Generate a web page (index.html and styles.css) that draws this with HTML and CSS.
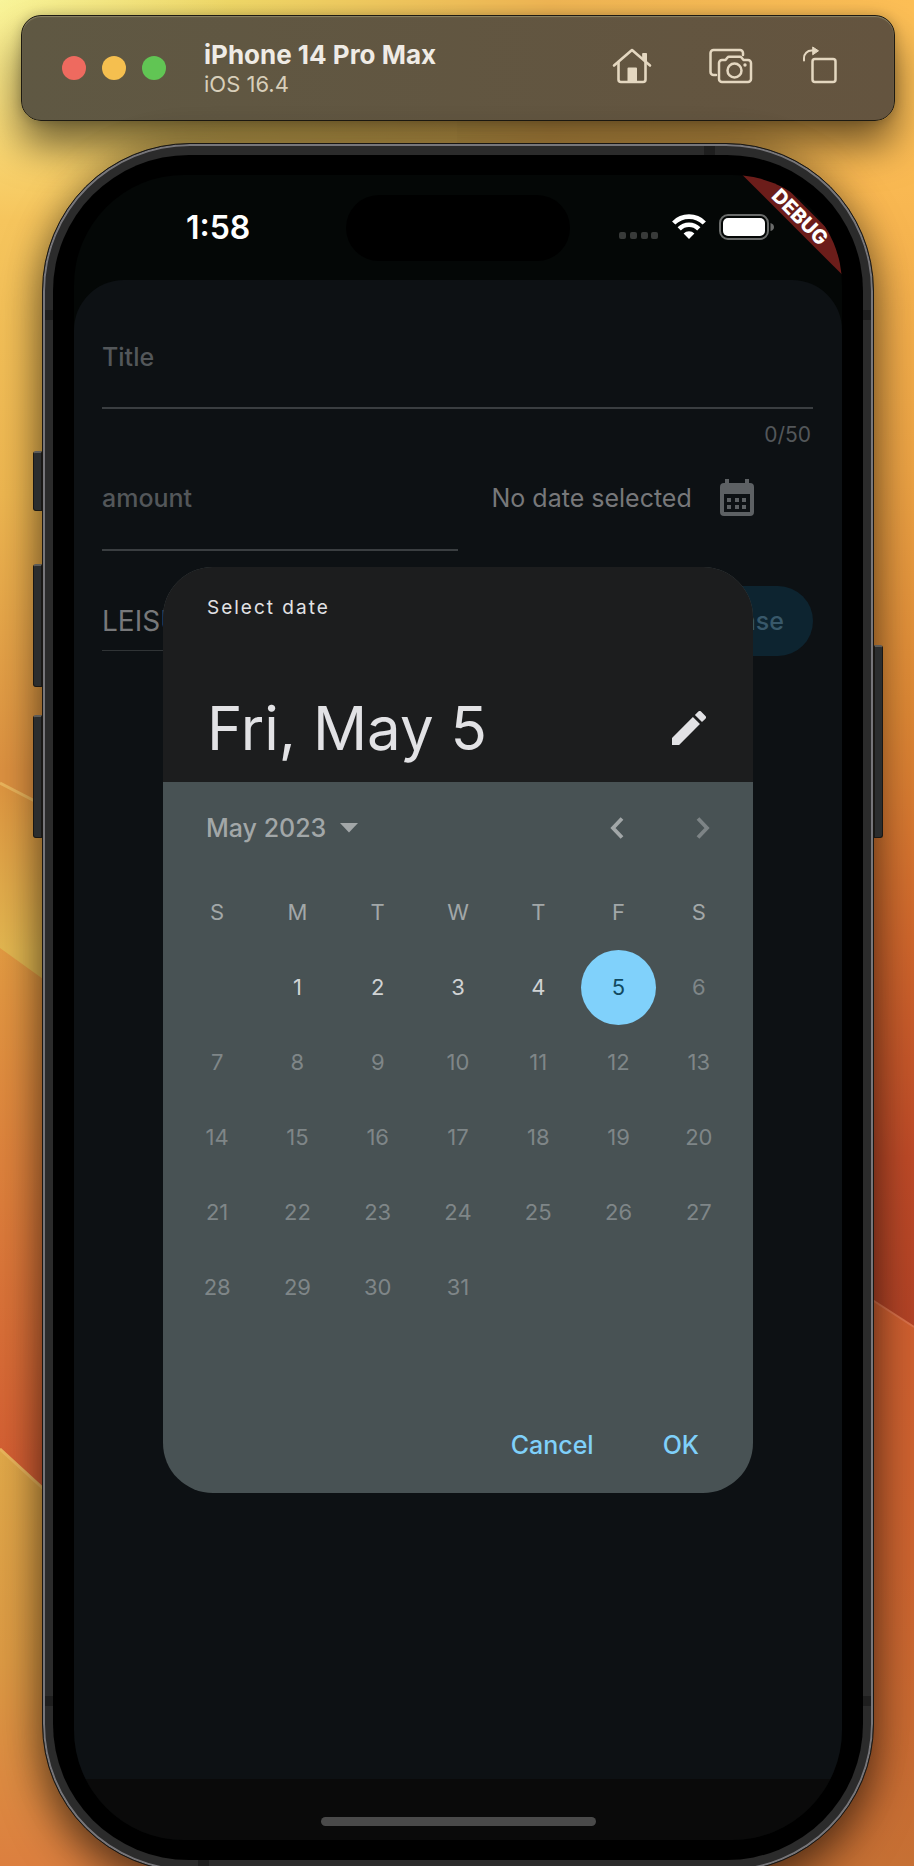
FILE: index.html
```html
<!DOCTYPE html>
<html lang="en">
<head>
<meta charset="utf-8">
<meta name="viewport" content="width=device-width, initial-scale=1">
<title>iPhone 14 Pro Max</title>
<link rel="stylesheet" href="styles.css">
</head>
<body>
<div class="desktop">
  <svg class="wallpaper" viewBox="0 0 914 1866" preserveAspectRatio="none" aria-hidden="true">
    <defs>
      <linearGradient id="top" x1="0" y1="0" x2="1" y2="0"><stop offset="0" stop-color="#f9f59a"/><stop offset=".25" stop-color="#f0d968"/><stop offset=".6" stop-color="#f0b654"/><stop offset="1" stop-color="#fdbf56"/></linearGradient>
      <linearGradient id="left" x1="0" y1="0" x2="0" y2="1"><stop offset="0" stop-color="#fbc95f" stop-opacity="0"/><stop offset=".2" stop-color="#f6c55d"/><stop offset=".45" stop-color="#edb650"/><stop offset=".7" stop-color="#db9040"/></linearGradient>
      <linearGradient id="left2" gradientUnits="userSpaceOnUse" x1="0" y1="790" x2="0" y2="950"><stop offset="0" stop-color="#dd9641"/><stop offset="1" stop-color="#e2b650"/></linearGradient>
      <linearGradient id="left3" gradientUnits="userSpaceOnUse" x1="0" y1="948" x2="0" y2="1460"><stop offset="0" stop-color="#e29a42"/><stop offset=".5" stop-color="#dc7d3b"/><stop offset="1" stop-color="#d45f33"/></linearGradient>
      <linearGradient id="left4" x1="0" y1="0" x2="0" y2="1"><stop offset="0" stop-color="#e0a849"/><stop offset=".5" stop-color="#dc9a44"/><stop offset="1" stop-color="#dc7f3f"/></linearGradient>
      <linearGradient id="right" x1="0" y1="0" x2="0" y2="1"><stop offset="0" stop-color="#fdbf56"/><stop offset=".3" stop-color="#eca345"/><stop offset=".5" stop-color="#dc8735"/><stop offset=".68" stop-color="#cf672d"/><stop offset=".86" stop-color="#bd4a28"/><stop offset="1" stop-color="#b24326"/></linearGradient>
      <linearGradient id="right2" x1="0" y1="0" x2="0" y2="1"><stop offset="0" stop-color="#cf5e30"/><stop offset=".5" stop-color="#cc6430"/><stop offset="1" stop-color="#c67034"/></linearGradient>
    </defs>
    <rect width="914" height="1866" fill="url(#top)"/>
    <path d="M0 0H457V1100L0 790Z" fill="url(#left)"/>
    <path d="M0 782L100 834V1100L0 1000Z" fill="url(#left2)"/>
    <path d="M0 948L100 1020V1600L0 1460Z" fill="url(#left3)"/>
    <path d="M0 1448L457 1866H0Z" fill="url(#left4)"/>
    <path d="M0 783L60 814M0 1449L60 1504" stroke="#e9b45c" stroke-width="3"/>
    <path d="M800 100H914V1330H800Z" fill="url(#right)"/>
    <path d="M800 1253L914 1327V1866H457V1253Z" fill="url(#right2)"/>
    <path d="M860 1292L914 1327" stroke="#d9714a" stroke-width="2"/>
  </svg>

  <header class="toolbar">
    <div class="lights">
      <button class="light light-close" aria-label="Close"></button>
      <button class="light light-min" aria-label="Minimize"></button>
      <button class="light light-zoom" aria-label="Zoom"></button>
    </div>
    <div class="device">
      <h1 class="device-name">iPhone 14 Pro Max</h1>
      <p class="device-os">iOS 16.4</p>
    </div>
    <nav class="tools">
      <button class="tool" aria-label="Home">
        <svg width="40" height="40" viewBox="0 0 40 40" fill="none" stroke="currentColor" stroke-width="2.6" stroke-linecap="round" stroke-linejoin="round"><path d="M2 19.500L20 4L38 19.500"/><path d="M6.500 16V33.500a2.500 2.500 0 0 0 2.500 2.500H31a2.500 2.500 0 0 0 2.500-2.500V16"/><path d="M31 7.500h3.500v8L31 12.500z" fill="currentColor" stroke-width="1"/><path d="M16.500 22.500h7.500v13h-7.500z" fill="currentColor" stroke-width="2"/></svg>
      </button>
      <button class="tool" aria-label="Screenshot">
        <svg width="44" height="40" viewBox="0 0 44 40" fill="none" stroke="currentColor" stroke-width="2.500" stroke-linecap="round" stroke-linejoin="round"><path d="M7 29H4.500A3 3 0 0 1 1.500 26V7A3 3 0 0 1 4.500 4H31a3 3 0 0 1 3 3V9"/><path d="M13 14h3.500l2-2.500a2 2 0 0 1 1.500-.7h11a2 2 0 0 1 1.500.7L34.500 14H39a3 3 0 0 1 3 3V33a3 3 0 0 1-3 3H13a3 3 0 0 1-3-3V17a3 3 0 0 1 3-3z"/><circle cx="25.500" cy="24.500" r="7"/><circle cx="36" cy="19" r="1.700" fill="currentColor" stroke="none"/></svg>
      </button>
      <button class="tool" aria-label="Rotate">
        <svg width="36" height="40" viewBox="0 0 36 40" fill="none" stroke="currentColor" stroke-width="2.500" stroke-linecap="round" stroke-linejoin="round"><rect x="10.500" y="13" width="23" height="23" rx="2.500"/><path d="M2 14.500V12a7.500 7.500 0 0 1 7.500-7.500H11" stroke-width="2"/><path d="M11 1.200L16.500 4.800L11 8.600z" fill="currentColor" stroke-width="1"/></svg>
      </button>
    </nav>
  </header>

  <div class="phone">
    <i class="key key-mute"></i><i class="key key-up"></i><i class="key key-down"></i><i class="key key-power"></i>
    <i class="band band-top"></i><i class="band band-bottom"></i>
    <i class="band band-side band-upper-left"></i><i class="band band-side band-upper-right"></i>
    <i class="band band-side band-lower-left"></i><i class="band band-side band-lower-right"></i>
    <div class="bezel">
      <div class="screen">
        <div class="status">
          <time class="clock">1:58</time>
          <span class="island"></span>
          <div class="signals">
            <svg width="40" height="26" viewBox="0 0 40 26" fill="#383a39"><rect y="18" width="7" height="7" rx="2"/><rect x="11" y="18" width="7" height="7" rx="2"/><rect x="22" y="18" width="7" height="7" rx="2"/><rect x="32" y="18" width="7" height="7" rx="2"/></svg>
            <svg width="34" height="26" viewBox="0 0 34 26" fill="none" stroke="#fff" stroke-width="4.600"><path d="M1.700 9A21.600 21.600 0 0 1 32.300 9"/><path d="M7.200 14.800A13.800 13.800 0 0 1 26.800 14.800"/><path d="M17 25L11.600 19.500A7.600 7.600 0 0 1 22.400 19.500Z" fill="#fff" stroke="none"/></svg>
            <svg width="56" height="26" viewBox="0 0 56 26"><rect x="1" y="1" width="48" height="24" rx="8" fill="none" stroke="#6a6c6b" stroke-width="2"/><rect x="4" y="4" width="42" height="18" rx="5" fill="#fff"/><path d="M51.500 9Q55 10 55 13T51.500 17Z" fill="#6a6c6b"/></svg>
          </div>
        </div>

        <main class="sheet">
          <div class="field">
            <label class="label" for="title">Title</label>
            <input class="input" id="title" type="text" maxlength="50">
          </div>
          <div class="counter">0/50</div>
          <div class="row row-date">
            <div class="field">
              <label class="label" for="amount">amount</label>
              <input class="input" id="amount" type="text" inputmode="decimal">
            </div>
            <div class="date">
              <span>No date selected</span>
              <button class="calendar-button" aria-label="Pick a date">
                <svg width="34" height="38" viewBox="0 0 34 38" fill="currentColor"><path fill-rule="evenodd" d="M5 0h4v4H25V0h4v4h1a4 4 0 0 1 4 4V33a4 4 0 0 1-4 4H4a4 4 0 0 1-4-4V8A4 4 0 0 1 4 4H5zM4 15V33H30V15zM7 19h4v4H7zm8 0h4v4h-4zm7 0h4v4h-4zM7 26h4v4H7zm8 0h4v4h-4zm7 0h4v4h-4z"/></svg>
              </button>
            </div>
          </div>
          <div class="row row-actions">
            <select class="category" aria-label="Category"><option>LEISURE</option></select>
            <button class="save">Save Expense</button>
          </div>
        </main>

        <section class="dialog" role="dialog" aria-labelledby="picker-label">
          <div class="dialog-head">
            <p class="picker-label" id="picker-label">Select date</p>
            <div class="headline">
              <h2 class="headline-date">Fri, May 5</h2>
              <button class="icon-button edit" aria-label="Edit date">
                <svg width="34" height="34" viewBox="3 3 18 18" fill="currentColor"><path d="M3 17.250V21h3.750L17.810 9.940l-3.750-3.750L3 17.250zM20.710 7.040a1 1 0 0 0 0-1.410l-2.340-2.340a1 1 0 0 0-1.410 0l-1.830 1.830 3.750 3.750 1.830-1.830z"/></svg>
              </button>
            </div>
          </div>
          <div class="dialog-body">
            <div class="month-row">
              <button class="month">May 2023
                <svg width="18" height="10" viewBox="0 0 18 10" fill="currentColor"><path d="M0 0H18L9 9.500Z"/></svg>
              </button>
              <div class="pager">
                <button class="icon-button" aria-label="Previous month"><svg width="14" height="22" viewBox="0 0 14 22" fill="none" stroke="currentColor" stroke-width="3.800"><path d="M12 1.500L3 11L12 20.500"/></svg></button>
                <button class="icon-button" disabled aria-label="Next month"><svg width="14" height="22" viewBox="0 0 14 22" fill="none" stroke="currentColor" stroke-width="3.800"><path d="M2 1.500L11 11L2 20.500"/></svg></button>
              </div>
            </div>
            <table class="calendar">
              <thead><tr><th>S</th><th>M</th><th>T</th><th>W</th><th>T</th><th>F</th><th>S</th></tr></thead>
              <tbody>
                <tr><td></td><td><button class="day">1</button></td><td><button class="day">2</button></td><td><button class="day">3</button></td><td><button class="day">4</button></td><td><button class="day selected">5</button></td><td><button class="day" disabled>6</button></td></tr>
                <tr><td><button class="day" disabled>7</button></td><td><button class="day" disabled>8</button></td><td><button class="day" disabled>9</button></td><td><button class="day" disabled>10</button></td><td><button class="day" disabled>11</button></td><td><button class="day" disabled>12</button></td><td><button class="day" disabled>13</button></td></tr>
                <tr><td><button class="day" disabled>14</button></td><td><button class="day" disabled>15</button></td><td><button class="day" disabled>16</button></td><td><button class="day" disabled>17</button></td><td><button class="day" disabled>18</button></td><td><button class="day" disabled>19</button></td><td><button class="day" disabled>20</button></td></tr>
                <tr><td><button class="day" disabled>21</button></td><td><button class="day" disabled>22</button></td><td><button class="day" disabled>23</button></td><td><button class="day" disabled>24</button></td><td><button class="day" disabled>25</button></td><td><button class="day" disabled>26</button></td><td><button class="day" disabled>27</button></td></tr>
                <tr><td><button class="day" disabled>28</button></td><td><button class="day" disabled>29</button></td><td><button class="day" disabled>30</button></td><td><button class="day" disabled>31</button></td><td></td><td></td><td></td></tr>
              </tbody>
            </table>
            <div class="dialog-actions">
              <button class="text-button">Cancel</button>
              <button class="text-button">OK</button>
            </div>
          </div>
        </section>

        <div class="home"><span class="home-bar"></span></div>
        <span class="debug">DEBUG</span>
      </div>
    </div>
  </div>
</div>
</body>
</html>
```

FILE: styles.css
```css
* {
  box-sizing: border-box;
}

body {
  margin: 0;
  font-family: Inter, "Liberation Sans", sans-serif;
  background: #dc9a44;
}

h1, h2, p {
  margin: 0;
}

button, input, select {
  margin: 0;
  padding: 0;
  border: 0;
  background: none;
  color: inherit;
  font: inherit;
}

svg {
  display: block;
}

.desktop {
  position: relative;
  min-height: 100vh;
  padding: 15px 19px 0 21px;
  overflow: hidden;
}

.wallpaper {
  position: absolute;
  inset: 0;
  width: 100%;
  height: 100%;
}

/* Simulator toolbar */
.toolbar {
  position: relative;
  display: flex;
  align-items: center;
  height: 106px;
  padding: 0 56px 0 40px;
  border: 1px solid #1d1a12;
  border-radius: 20px;
  background: linear-gradient(90deg, #5f5843, #64543f);
  box-shadow: inset 0 1px 1px #8d8567, 0 24px 40px rgba(0, 0, 0, 0.55), 0 0 12px rgba(0, 0, 0, 0.2);
}

.lights {
  display: flex;
  gap: 16px;
}

.light {
  width: 24px;
  height: 24px;
  border-radius: 50%;
}

.light-close { background: #ee6a5f; }
.light-min { background: #f5bf4f; }
.light-zoom { background: #61c554; }

.device {
  flex: 1;
  margin-left: 38px;
}

.device-name {
  font-size: 26px;
  line-height: 32px;
  font-weight: 700;
  color: #efebe5;
}

.device-os {
  font-size: 22px;
  line-height: 26px;
  color: #d8cfba;
}

.tools {
  display: flex;
  justify-content: space-between;
  width: 226px;
  padding-bottom: 4px;
  color: #e4d7c0;
}

.tool:nth-child(2) {
  margin-left: 8px;
}

/* Device frame */
.phone {
  position: relative;
  display: flex;
  min-height: 1540px;
  height: calc(100vh - 137px);
  margin: 22px 21px -8px;
  padding: 11px 10px;
  border: 1px solid #191714;
  border-radius: 148px;
  background: #2b2b2b;
  box-shadow: inset 0 0 0 2px #77767a, 0 20px 44px rgba(0, 0, 0, 0.5), 0 0 36px rgba(0, 0, 0, 0.22);
}

.bezel {
  flex: 1;
  display: flex;
  padding: 20px 21px;
  border-radius: 136px;
  background: #000;
}

.screen {
  position: relative;
  flex: 1;
  min-width: 0;
  display: flex;
  flex-direction: column;
  overflow: hidden;
  border-radius: 110px;
  background: #040706;
}

.key {
  position: absolute;
  left: -10px;
  width: 9px;
  border: 1px solid #191714;
  border-top: 2px solid #5c5b58;
  border-radius: 3px 0 0 3px;
  background: #2b2d2e;
}

.key-mute { top: 307px; height: 60px; }
.key-up { top: 420px; height: 123px; }
.key-down { top: 571px; height: 123px; }

.key-power {
  top: 501px;
  left: auto;
  right: -10px;
  height: 193px;
  border-radius: 0 3px 3px 0;
}

.band {
  position: absolute;
  width: 11px;
  height: 9px;
  background: #1e1e1e;
}

.band-top { top: 2px; right: 158px; }
.band-bottom { bottom: 2px; left: 155px; }
.band-side { width: 8px; height: 10px; }
.band-upper-left { top: 166px; left: 2px; }
.band-upper-right { top: 166px; right: 2px; }
.band-lower-left { bottom: 165px; left: 2px; }
.band-lower-right { bottom: 165px; right: 2px; }

/* Status bar */
.status {
  display: grid;
  grid-template-columns: 1fr 224px 1fr;
  align-items: center;
  height: 105px;
}

.clock {
  padding-left: 112px;
  font-size: 32px;
  line-height: 36px;
  font-weight: 600;
  color: #fff;
}

.island {
  height: 66px;
  border-radius: 33px;
  background: #000;
}

.signals {
  display: flex;
  gap: 13px;
  padding: 0 0 2px 49px;
}

.debug {
  position: absolute;
  top: 31px;
  right: -58px;
  width: 200px;
  transform: rotate(45deg);
  background: #6c1d1a;
  color: #fff;
  font-size: 20px;
  line-height: 22px;
  font-weight: 800;
  text-align: center;
}

/* Expense form */
.sheet {
  flex: 1;
  padding: 61px 29px 0 28px;
  border-radius: 50px 50px 0 0;
  background: #0d1114;
  color: #77787a;
}

.field {
  display: flex;
  flex-direction: column;
}

.label {
  font-size: 25px;
  line-height: 32px;
  font-weight: 500;
  color: #53575a;
}

.input {
  width: 100%;
  height: 36px;
  border-bottom: 2px solid #3a3e41;
  font-size: 25px;
}

.counter {
  margin-top: 12px;
  padding-right: 2px;
  font-size: 21px;
  line-height: 28px;
  color: #53575a;
  text-align: right;
}

.row {
  display: grid;
  grid-template-columns: 1fr 1fr;
}

.row-date {
  margin-top: 33px;
}

.row-date .input {
  height: 37px;
}

.date {
  display: flex;
  align-items: center;
  gap: 28px;
  height: 32px;
  padding-left: 34px;
  font-size: 25px;
  line-height: 32px;
}

.calendar-button {
  color: #5d6164;
}

.row-actions {
  margin-top: 35px;
  align-items: center;
}

.category {
  appearance: none;
  width: 200px;
  height: 60px;
  border-bottom: 1px solid #303436;
  border-radius: 0;
  font-size: 28px;
}

.save {
  justify-self: end;
  height: 70px;
  padding: 0 29px;
  border-radius: 35px;
  background: #0d2430;
  color: #38586a;
  font-size: 25px;
  font-weight: 500;
}

/* Date picker */
.dialog {
  position: absolute;
  top: 392px;
  left: 89px;
  right: 89px;
  overflow: hidden;
  border-radius: 50px;
  background: #485254;
}

.dialog-head {
  padding: 29px 47px 18px 44px;
  background: #1c1d1e;
  color: #e2e2e5;
}

.picker-label {
  font-size: 19px;
  line-height: 24px;
  letter-spacing: 2px;
}

.headline {
  display: flex;
  align-items: center;
  justify-content: space-between;
  margin-top: 72px;
}

.headline-date {
  font-size: 60px;
  line-height: 72px;
  font-weight: 400;
}

.dialog-body {
  padding: 16px 14px 0;
}

.month-row {
  display: flex;
  align-items: center;
  justify-content: space-between;
  height: 60px;
  margin-bottom: 17px;
  padding: 0 29px;
  color: #a2a7a8;
}

.month {
  display: flex;
  align-items: center;
  gap: 14px;
  font-size: 25px;
  line-height: 32px;
  font-weight: 500;
}

.pager {
  display: flex;
  gap: 72px;
}

.icon-button:disabled {
  color: #7d8486;
}

.calendar {
  width: 100%;
  table-layout: fixed;
  border-collapse: collapse;
  font-size: 22px;
}

.calendar th,
.calendar td {
  height: 75px;
  padding: 0;
  font-weight: 400;
  text-align: center;
}

.calendar th {
  padding-bottom: 2px;
  color: #a2a7a8;
}

.day {
  width: 75px;
  height: 75px;
  padding-bottom: 2px;
  border-radius: 50%;
  color: #d0d3d4;
}

.day:disabled {
  color: #7f8688;
}

.day.selected {
  background: #80d1fb;
  color: #12495f;
}

.dialog-actions {
  display: flex;
  justify-content: flex-end;
  gap: 69px;
  padding: 104px 40px 32px;
}

.text-button {
  color: #7fd0fa;
  font-size: 25px;
  line-height: 32px;
  font-weight: 500;
}

/* Home indicator */
.home {
  display: flex;
  justify-content: center;
  height: 61px;
  padding-top: 38px;
  background: #0a0a0a;
}

.home-bar {
  width: 275px;
  height: 9px;
  border-radius: 5px;
  background: #4a4a4a;
}
```
